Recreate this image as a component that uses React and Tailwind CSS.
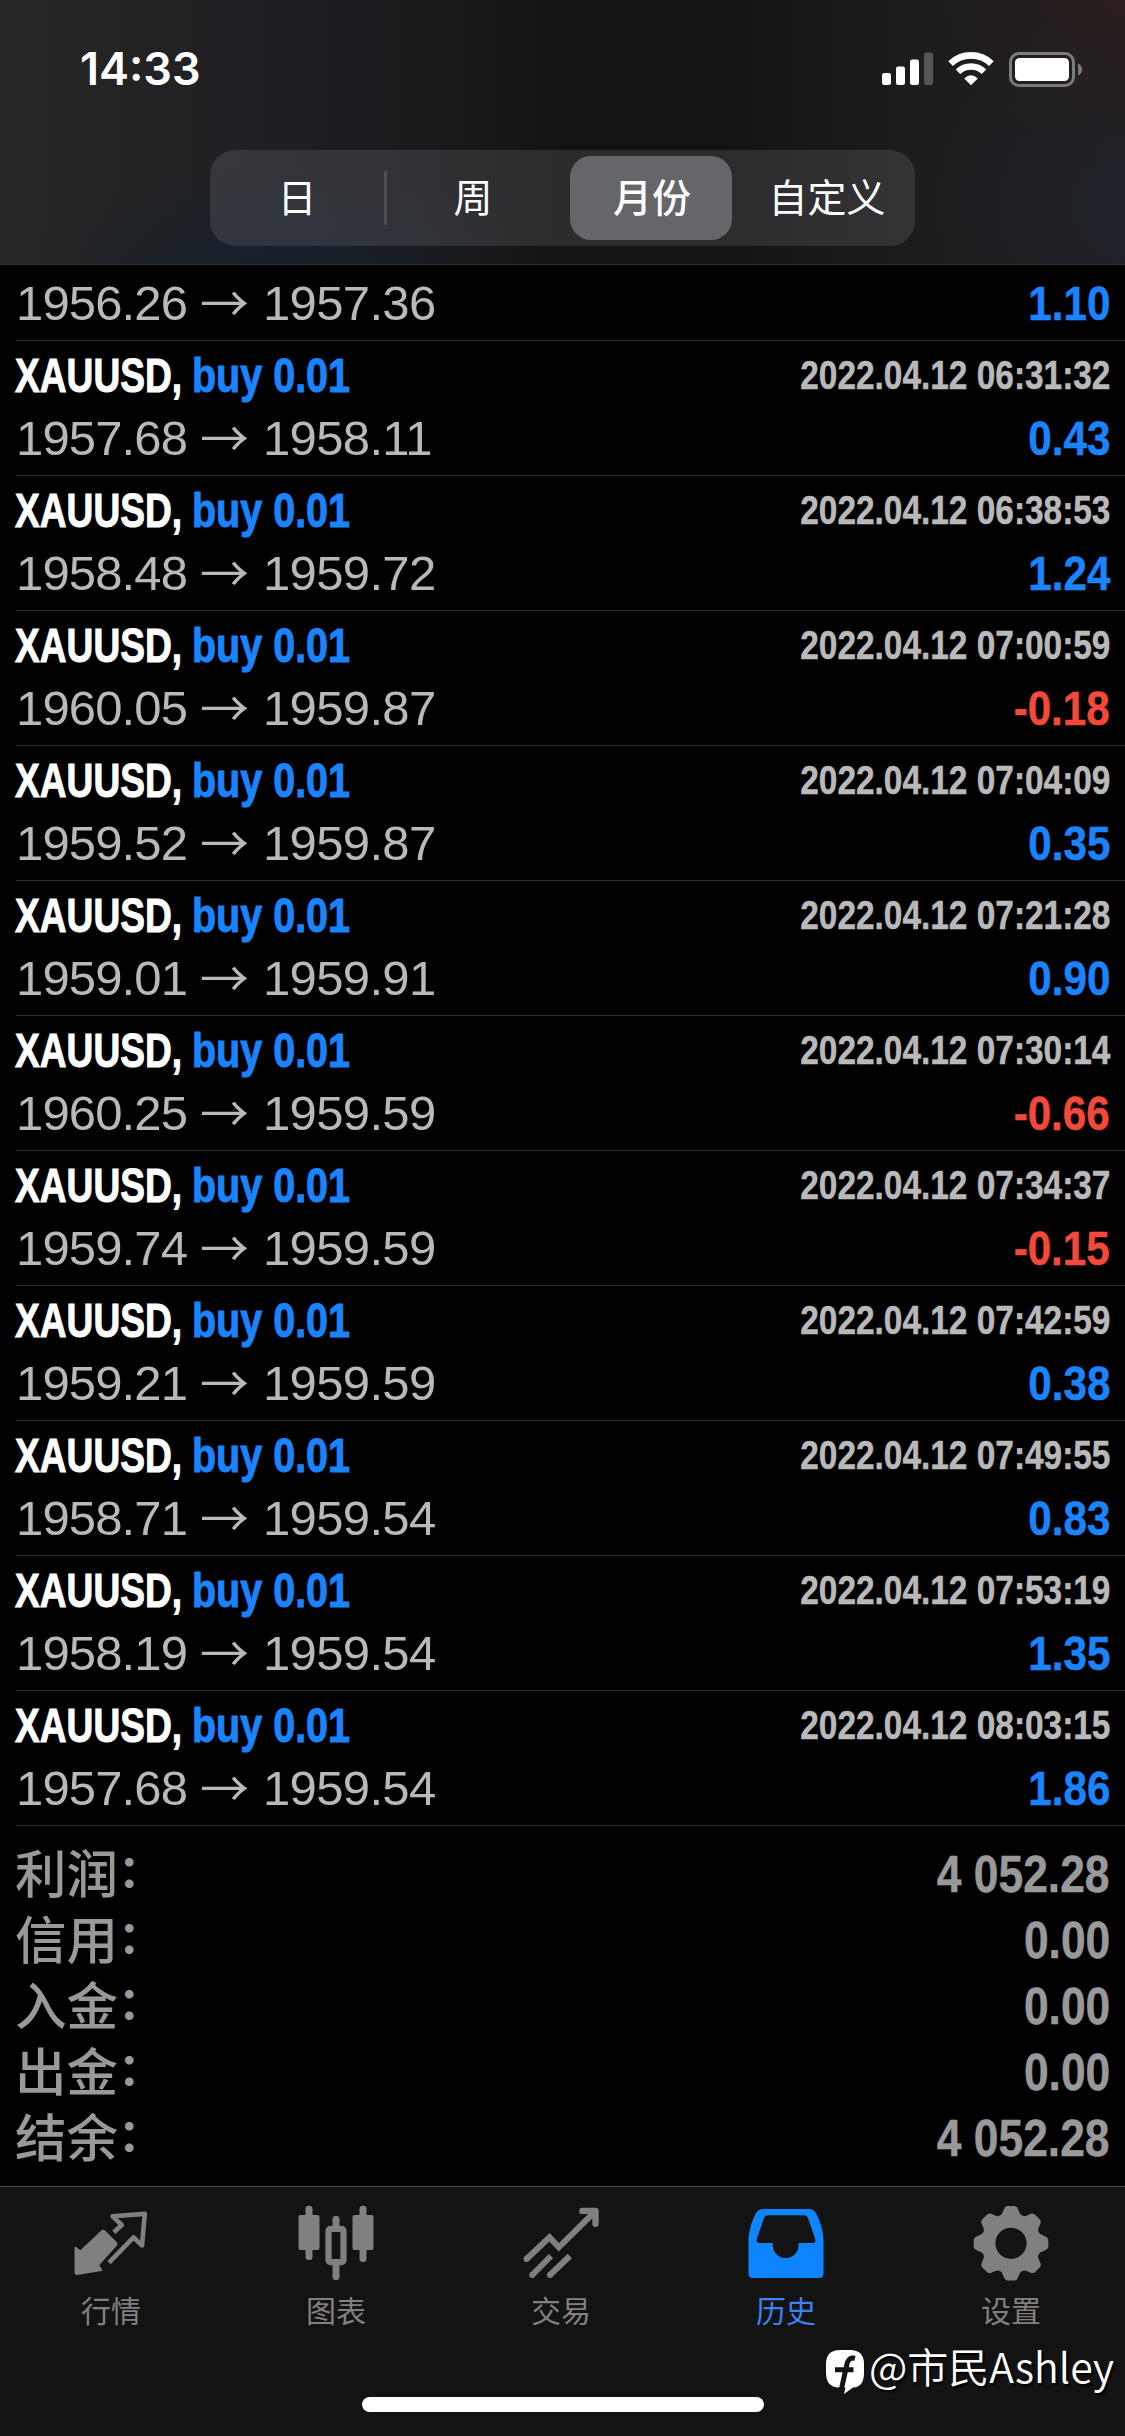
const deals = [
    { time: '2022.04.12 06:31:32', open: '1957.68', close: '1958.11', profit: '0.43' },
    { time: '2022.04.12 06:38:53', open: '1958.48', close: '1959.72', profit: '1.24' },
    { time: '2022.04.12 07:00:59', open: '1960.05', close: '1959.87', profit: '-0.18' },
    { time: '2022.04.12 07:04:09', open: '1959.52', close: '1959.87', profit: '0.35' },
    { time: '2022.04.12 07:21:28', open: '1959.01', close: '1959.91', profit: '0.90' },
    { time: '2022.04.12 07:30:14', open: '1960.25', close: '1959.59', profit: '-0.66' },
    { time: '2022.04.12 07:34:37', open: '1959.74', close: '1959.59', profit: '-0.15' },
    { time: '2022.04.12 07:42:59', open: '1959.21', close: '1959.59', profit: '0.38' },
    { time: '2022.04.12 07:49:55', open: '1958.71', close: '1959.54', profit: '0.83' },
    { time: '2022.04.12 07:53:19', open: '1958.19', close: '1959.54', profit: '1.35' },
    { time: '2022.04.12 08:03:15', open: '1957.68', close: '1959.54', profit: '1.86' },
];

const totals = [
    { label: '利润', value: '4 052.28' },
    { label: '信用', value: '0.00' },
    { label: '入金', value: '0.00' },
    { label: '出金', value: '0.00' },
    { label: '结余', value: '4 052.28' },
];

function SignalIcon() {
    return (
        <svg width="52" height="34" viewBox="0 0 52 34" fill="#fff">
            <rect x="0" y="21" width="9" height="12" rx="2.2" />
            <rect x="14" y="14.5" width="9" height="18.5" rx="2.2" />
            <rect x="28" y="7.5" width="9" height="25.5" rx="2.2" />
            <rect x="42" y="0.5" width="9" height="32.5" rx="2.2" opacity="0.25" />
        </svg>
    );
}

function WifiIcon() {
    return (
        <svg width="46" height="34" viewBox="0 0 46 34" fill="none" stroke="#fff">
            <path d="M2.6 11.6A29.5 29.5 0 0 1 43.4 11.6" strokeWidth="6.8" />
            <path d="M10 19.8A18.5 18.5 0 0 1 36 19.8" strokeWidth="6.4" />
            <path d="M23 33.2L16.2 26.4Q23 20.2 29.8 26.4Z" fill="#fff" stroke="none" />
        </svg>
    );
}

function BatteryIcon() {
    return (
        <svg width="74" height="36" viewBox="0 0 74 36">
            <rect x="1.5" y="1.5" width="63" height="32" rx="8.5" fill="none" stroke="#7c7b7b" strokeWidth="3" />
            <rect x="6" y="6" width="54" height="23" rx="4.5" fill="#fff" />
            <path d="M69 11.5Q73 13 73 17.5T69 23.5Z" fill="#7c7b7b" />
        </svg>
    );
}

function QuotesIcon() {
    return (
        <svg width="90" height="80" viewBox="0 0 90 80" fill="none">
            <path
                d="M9.5 43.7L14.4 47.6L36 27.3Q37.3 26.2 38.6 27.4L50 38.6Q51 39.8 50 41L32 61L35.4 66L11 69.9Q9.5 70 9.5 68.5Z"
                fill="#808080"
                stroke="#808080"
                strokeWidth="2"
                strokeLinejoin="round"
            />
            <path
                d="M47.8 28.3L55.8 21L46.6 12.3L78.8 9.9L76 41.5L67.5 33.3L43 58.6"
                stroke="#808080"
                strokeWidth="4.6"
                strokeLinejoin="round"
            />
        </svg>
    );
}

function ChartIcon() {
    return (
        <svg width="90" height="80" viewBox="0 0 90 80" fill="#808080">
            <rect x="14.5" y="1.7" width="7" height="54.3" rx="3" />
            <rect x="7.5" y="11" width="21" height="35" rx="2" />
            <rect x="41.5" y="12" width="7" height="14" rx="3" />
            <rect x="41.5" y="58" width="7" height="18" rx="3" />
            <rect x="37.5" y="24.9" width="15" height="33.2" rx="2" fill="none" stroke="#808080" strokeWidth="6.2" />
            <rect x="68.5" y="1.7" width="7" height="56.3" rx="3" />
            <rect x="61.5" y="11" width="21" height="35" rx="2" />
        </svg>
    );
}

function TradeIcon() {
    return (
        <svg width="90" height="80" viewBox="0 0 90 80" fill="none" stroke="#808080" strokeWidth="6">
            <path d="M10.5 55L33.5 33.3L42.8 43.3L78.5 8" />
            <path d="M66.4 6.9H79.5V19.8" strokeWidth="6.4" strokeLinecap="round" strokeLinejoin="round" />
            <path d="M16.2 71L35 52M34 71L53.8 52" />
            <g fill="#808080" stroke="none">
                <circle cx="10.5" cy="55" r="3" />
                <circle cx="16.2" cy="71" r="3" />
                <circle cx="34" cy="71" r="3" />
            </g>
        </svg>
    );
}

function HistoryIcon() {
    return (
        <svg width="90" height="80" viewBox="0 0 90 80">
            <path
                fillRule="evenodd"
                fill="#0f84ff"
                d="M22 5H68Q73 5 75.5 10C80 19 82.5 28 82.5 38V69.5Q82.5 74 78 74H12Q7.5 74 7.5 69.5V38C7.5 28 10 19 14.5 10Q17 5 22 5ZM27 11.3Q24 11.3 23 14L15.8 35Q14.8 39 18.5 39H31.8V42.3A12.9 12.9 0 0 0 57.5 42.3V39H71.5Q75.2 39 74.2 35L67 14Q66 11.3 63 11.3Z"
            />
        </svg>
    );
}

function SettingsIcon() {
    const polar = (r, deg) => {
        const a = (deg * Math.PI) / 180;
        return `${(45 + r * Math.sin(a)).toFixed(2)} ${(39.3 - r * Math.cos(a)).toFixed(2)}`;
    };
    const teeth = [0, 45, 90, 135, 180, 225, 270, 315]
        .map(
            (a, i) =>
                `${i === 0 ? 'M' : 'L'}${polar(30.6, a - 17.5)}L${polar(34.5, a - 12)}Q${polar(37, a - 10.5)} ${polar(37.5, a - 6)}L${polar(37.5, a + 6)}Q${polar(37, a + 10.5)} ${polar(34.5, a + 12)}L${polar(30.6, a + 17.5)}Q${polar(29, a + 22.5)} ${polar(30.6, a + 27.5)}`
        )
        .join('');
    return (
        <svg width="90" height="80" viewBox="0 0 90 80">
            <path
                fillRule="evenodd"
                fill="#808080"
                d={`${teeth}ZM45 23.7A15.6 15.6 0 1 0 45 54.9A15.6 15.6 0 1 0 45 23.7Z`}
            />
        </svg>
    );
}

const tabs = [
    { label: '行情', icon: QuotesIcon },
    { label: '图表', icon: ChartIcon },
    { label: '交易', icon: TradeIcon },
    { label: '历史', icon: HistoryIcon, active: true },
    { label: '设置', icon: SettingsIcon },
];

function Header() {
    return (
        <header className="h-[265px] shrink-0 border-b border-[#2f2f30] bg-[radial-gradient(ellipse_260px_110px_at_24%_104%,#16212ddd,transparent),radial-gradient(ellipse_260px_200px_at_104%_-8%,#2e1e1e,transparent),radial-gradient(ellipse_260px_200px_at_102%_78%,#20232c,transparent),linear-gradient(90deg,#272727_0%,#232324_12%,#1e1f24_25%,#1a1b1d_37%,#131313_50%,#131313_64%,#1c1c1c_80%,#1e1e1e_100%)]">
            <div className="flex h-[150px] items-start justify-between pl-[80px] pr-[42px]">
                <div className="mt-[41px] font-['Inter',sans-serif] text-[45px] font-semibold leading-[56px]">
                    14:33
                </div>
                <div className="mt-[52px] flex">
                    <SignalIcon />
                    <div className="ml-[14px]">
                        <WifiIcon />
                    </div>
                    <div className="ml-[15px]">
                        <BatteryIcon />
                    </div>
                </div>
            </div>
            <div className="ml-[210px] flex h-[96px] w-[705px] items-center rounded-[25px] bg-[#76768040] text-[39px] leading-none">
                <div className="w-[174px] pt-[1px] text-center">日</div>
                <div className="h-[54px] w-[3px] rounded-full bg-[#4d4d52]" />
                <div className="w-[172px] pt-[1px] text-center">周</div>
                <div className="ml-[11px] flex h-[84px] w-[162px] items-center justify-center rounded-[21px] bg-[#66656a] pt-[1px] pl-[2px] font-medium">
                    月份
                </div>
                <div className="flex-1 pt-[1px] pl-[7px] text-center">自定义</div>
            </div>
        </header>
    );
}

function Prices({ open, close, profit }) {
    return (
        <div className="flex h-[58px] justify-between text-[49px] leading-[58px]">
            <div className="flex text-[#b9b9b9]">
                <span className="w-[184px] tracking-[-0.85px]">{open}</span>
                <span className="w-[63px] font-['Noto_Sans_CJK_SC',sans-serif] text-[49px] leading-[54px]">→</span>
                <span className="tracking-[-0.65px]">{close}</span>
            </div>
            <div
                className={`origin-right scale-x-[0.86] font-bold [-webkit-text-stroke:0.5px] ${profit.startsWith('-') ? 'text-[#f2493a]' : 'text-[#1a84ff]'}`}
            >
                {profit}
            </div>
        </div>
    );
}

function Deal({ time, ...prices }) {
    return (
        <div className="ml-[16px] h-[135px] shrink-0 border-b border-[#2e2e2e] pr-[15px]">
            <div className="flex h-[68px] justify-between whitespace-nowrap font-bold leading-[68px]">
                <div className="-ml-px flex text-[49px] [-webkit-text-stroke:1px]">
                    <span className="w-[177px] origin-left scale-x-[0.758]">XAUUSD,</span>
                    <span className="origin-left scale-x-[0.806] text-[#1a84ff]">buy 0.01</span>
                </div>
                <div className="origin-right scale-x-[0.835] text-[40px] text-[#b9b9b9] [-webkit-text-stroke:0.5px]">
                    {time}
                </div>
            </div>
            <Prices {...prices} />
        </div>
    );
}

function Watermark() {
    return (
        <div className="absolute right-[11px] bottom-[40px] flex items-start whitespace-nowrap">
            <svg className="mt-[11px] mr-[3px]" width="40" height="46" viewBox="0 0 40 46">
                <path
                    fill="#fff"
                    d="M14 0H24Q38 0 38 14V23Q38 37 27 37.5L18 44L19.5 37.5H13Q0 37 0 23V14Q0 0 14 0Z"
                />
                <path
                    d="M29 8.2Q22.5 6.8 21 14L15 41M9 19.8H27.5"
                    fill="none"
                    stroke="#131313"
                    strokeWidth="5"
                />
            </svg>
            <span className="font-['Noto_Sans_CJK_SC',sans-serif] text-[41px] font-[350] leading-[52px] [text-shadow:2px_2px_2px_#000]">
                @市民Ashley
            </span>
        </div>
    );
}

function TabBar() {
    return (
        <nav className="relative h-[250px] shrink-0 border-t border-[#4a4a4a] bg-[#131313]">
            <div className="flex">
                {tabs.map(({ label, icon: Icon, active }) => (
                    <div key={label} className="flex w-[225px] flex-col items-center pt-[17px] pr-[3px]">
                        <Icon />
                        <span
                            className={`mt-[8px] text-[30px] leading-[40px] ${active ? 'text-[#3b82f0]' : 'text-[#808080]'}`}
                        >
                            {label}
                        </span>
                    </div>
                ))}
            </div>
            <div className="mx-auto mt-[65px] h-[15px] w-[402px] rounded-full bg-white" />
            <Watermark />
        </nav>
    );
}

export default function App() {
    return (
        <div className="flex h-[2436px] w-[1125px] flex-col overflow-hidden bg-black font-['Liberation_Sans','Noto_Sans_CJK_SC',sans-serif] text-white">
            <Header />
            {/* row scrolled halfway under the header */}
            <div className="ml-[16px] h-[76px] shrink-0 border-b border-[#2e2e2e] pt-[9px] pr-[15px]">
                <Prices open="1956.26" close="1957.36" profit="1.10" />
            </div>
            {deals.map((deal) => (
                <Deal key={deal.time} {...deal} />
            ))}
            <div className="flex-1 pt-[16px] pr-[15px] pl-[15px] text-[#999]">
                {totals.map(({ label, value }) => (
                    <div key={label} className="flex h-[66px] items-center justify-between leading-[66px]">
                        <div className="flex text-[51.5px] font-medium">
                            <span>{label}</span>
                            <span className="-mt-[6px] font-['Noto_Sans_CJK_SC',sans-serif] text-[45px] font-bold">
                                ：
                            </span>
                        </div>
                        <div className="origin-right scale-x-[0.87] text-[51px] font-bold [-webkit-text-stroke:0.5px]">
                            {value}
                        </div>
                    </div>
                ))}
            </div>
            <TabBar />
        </div>
    );
}
